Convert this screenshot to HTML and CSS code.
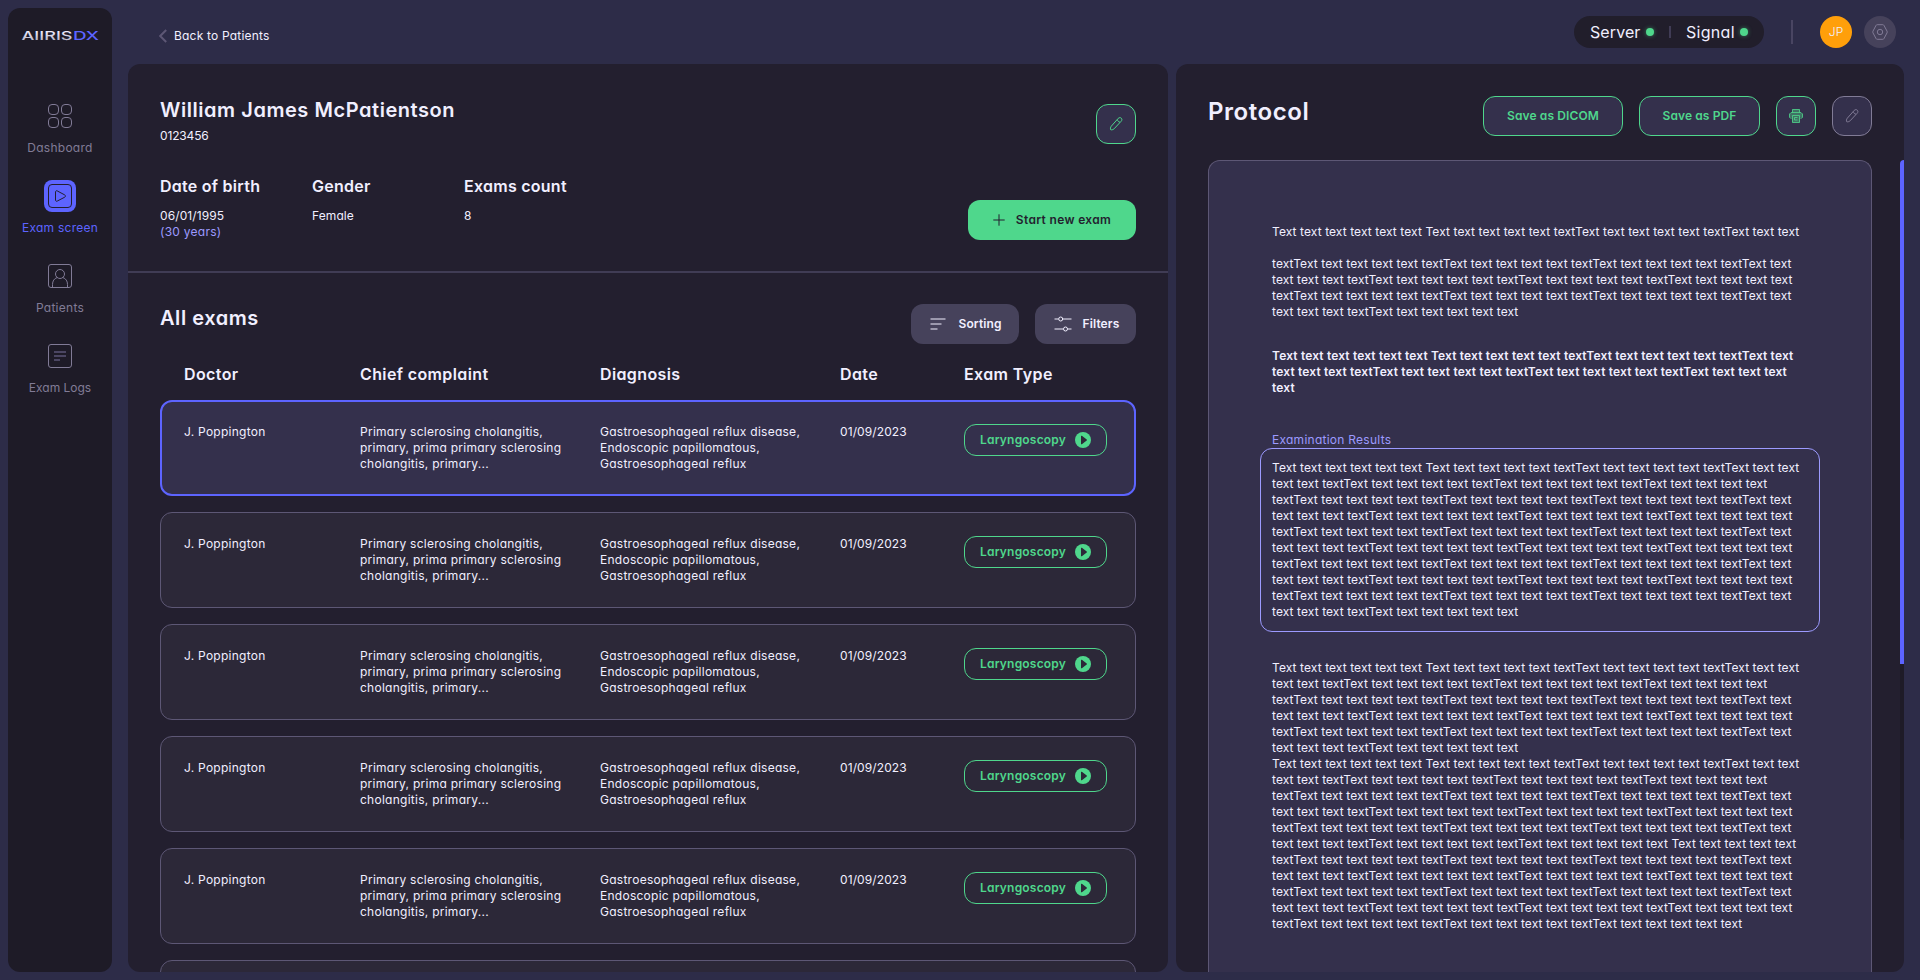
FILE: index.html
```html
<!DOCTYPE html>
<html lang="en">
<head>
    <meta charset="UTF-8">
    <meta name="viewport" content="width=device-width, initial-scale=1.0">
    <title>AIIRIS DX - Exam screen</title>
    <link rel="stylesheet" href="styles.css">
</head>
<body>

<aside class="sidebar">
    <svg class="logo" width="78" height="20" viewBox="0 0 78 20">
        <defs>
            <linearGradient id="logoFill" x1="0" y1="0" x2="0" y2="1">
                <stop offset="0.2" stop-color="#f1efff"/>
                <stop offset="1" stop-color="#a9a6b8"/>
            </linearGradient>
        </defs>
        <text x="0.5" y="14.2" textLength="51" lengthAdjust="spacingAndGlyphs" fill="url(#logoFill)">AIIRIS</text>
        <text x="52" y="14.2" textLength="26" lengthAdjust="spacingAndGlyphs" fill="#5d64ff">DX</text>
    </svg>
    <nav>
        <a class="nav-item">
            <span class="nav-icon">
                <svg width="24" height="24" viewBox="0 0 24 24">
                    <rect x="0.5" y="0.5" width="10" height="10" rx="3.5"/>
                    <rect x="13.5" y="0.5" width="10" height="10" rx="3.5"/>
                    <rect x="0.5" y="13.5" width="10" height="10" rx="3.5"/>
                    <rect x="13.5" y="13.5" width="10" height="10" rx="3.5"/>
                </svg>
            </span>
            <span class="nav-label">Dashboard</span>
        </a>
        <a class="nav-item active">
            <span class="nav-icon">
                <svg width="24" height="24" viewBox="0 0 24 24">
                    <rect x="0.5" y="0.5" width="23" height="23" rx="3.5"/>
                    <path d="M7.5 8v8c0 1 .8 1.600 1.700 1.100l7.500-3.900c1-.5 1-1.800 0-2.300l-7.500-4c-.9-.5-1.700.1-1.700 1.100z"/>
                </svg>
            </span>
            <span class="nav-label">Exam screen</span>
        </a>
        <a class="nav-item">
            <span class="nav-icon">
                <svg width="24" height="24" viewBox="0 0 24 24">
                    <rect x="0.5" y="0.5" width="23" height="23" rx="2.5"/>
                    <circle cx="12" cy="10" r="4.5"/>
                    <path d="M4.500 23v-2.500c0-3.500 1.700-6 4.700-7M19.500 23v-2.500c0-3.500-1.700-6-4.700-7"/>
                </svg>
            </span>
            <span class="nav-label">Patients</span>
        </a>
        <a class="nav-item">
            <span class="nav-icon">
                <svg width="24" height="24" viewBox="0 0 24 24">
                    <rect x="0.5" y="0.5" width="23" height="23" rx="2.5"/>
                    <path class="thick" d="M6 8h12M6 12h12M6 16h6"/>
                </svg>
            </span>
            <span class="nav-label logs">Exam Logs</span>
        </a>
    </nav>
</aside>

<div class="page">
    <header>
        <a class="back-link">
            <svg width="8" height="14" viewBox="0 0 8 14"><path d="M7.200 1L1.200 7l6 6"/></svg>
            Back to Patients
        </a>
        <div class="header-right">
            <div class="status-pill">
                <span>Server</span><i class="dot"></i>
                <i class="pill-line"></i>
                <span class="signal">Signal</span><i class="dot"></i>
            </div>
            <i class="header-line"></i>
            <span class="avatar">JP</span>
            <span class="settings">
                <svg width="16" height="16" viewBox="0 0 16 16">
                    <path d="M5.200.7h5.600c.5 0 .9.2 1.100.6l3.100 5.800c.3.600.3 1.200 0 1.800l-3.100 5.800c-.2.400-.6.600-1.100.600H5.200c-.5 0-.9-.2-1.100-.6L1 8.900c-.3-.6-.3-1.200 0-1.800l3.100-5.800c.2-.4.600-.6 1.100-.6z"/>
                    <circle cx="8" cy="8" r="2.700"/>
                </svg>
            </span>
        </div>
    </header>

    <main>
        <section class="panel exams-panel">
            <div class="patient">
                <div class="patient-info">
                    <h1>William James McPatientson</h1>
                    <p class="patient-id">0123456</p>
                    <dl>
                        <div><dt>Date of birth</dt><dd>06/01/1995<br><em>(30 years)</em></dd></div>
                        <div><dt>Gender</dt><dd>Female</dd></div>
                        <div><dt>Exams count</dt><dd>8</dd></div>
                    </dl>
                </div>
                <div class="patient-actions">
                    <button class="btn outline square">
                        <svg width="14" height="14" viewBox="0 0 14 14"><path d="M9.200 1.400c1-1 2.300-1 3.100-.2.800.8.800 2.100-.2 3.100l-7 7.500c-.9.900-2.700 1.300-3.400.900-.5-.6-.3-2.500.6-3.500zM8.400 2.600c.3 1.500 1.100 2.400 2.600 2.600"/></svg>
                    </button>
                    <button class="btn filled">
                        <svg width="12" height="12" viewBox="0 0 12 12"><path d="M6 .3v11.400M.3 6h11.400"/></svg>
                        Start new exam
                    </button>
                </div>
            </div>

            <div class="exams">
                <div class="exams-head">
                    <h2>All exams</h2>
                    <button class="btn soft sorting">
                        <svg width="16" height="14" viewBox="0 0 16 14"><path d="M.5 2h15M.5 7h11M.5 12h7"/></svg>
                        Sorting
                    </button>
                    <button class="btn soft filters">
                        <svg width="18" height="16" viewBox="0 0 18 16">
                            <path d="M.5 3h4M9 3h8.500M.5 13h8.500M13.500 13h4"/>
                            <circle cx="6.700" cy="3" r="2"/><circle cx="11.500" cy="13" r="2"/>
                        </svg>
                        Filters
                    </button>
                </div>
                <div class="exam-row exam-titles">
                    <span>Doctor</span>
                    <span>Chief complaint</span>
                    <span>Diagnosis</span>
                    <span>Date</span>
                    <span>Exam Type</span>
                </div>
                <div id="examList"></div>
            </div>
        </section>

        <section class="panel protocol">
            <div class="protocol-head">
                <h2>Protocol</h2>
                <button class="btn outline dicom">Save as DICOM</button>
                <button class="btn outline pdf">Save as PDF</button>
                <button class="btn outline square">
                    <svg width="16" height="16" viewBox="0 0 16 16">
                        <path class="shade" d="M4 1.500h8V5h1.500l1 1v3L12 10v4.500H4V10L1.500 9V6l1-1H4z"/>
                        <path class="thin" d="M4.500 4.500V1.500h7v3M3.500 10.500L1.500 9.500V6l1.500-1.500h10L14.500 6v3.500l-2 1M4.500 7.500h7v7h-7zM9.500 9.500h-3v2.500h3"/>
                    </svg>
                </button>
                <button class="btn outline square muted">
                    <svg width="14" height="14" viewBox="0 0 14 14"><path d="M9.200 1.400c1-1 2.300-1 3.100-.2.800.8.800 2.100-.2 3.100l-7 7.500c-.9.900-2.700 1.300-3.400.900-.5-.6-.3-2.500.6-3.500zM8.400 2.600c.3 1.500 1.100 2.400 2.600 2.600"/></svg>
                </button>
            </div>
            <div class="protocol-body">
                <article class="paper">
<p>Text text text text text text Text text text text text textText text text text text textText text text</p>
<p class="history">textText text text text text textText text text text text textText text text text text textText text
text text text textText text text text text textText text text text text textText text text text text
textText text text text text textText text text text text textText text text text text textText text
text text text textText text text text text text</p>
<p class="summary">Text text text text text text Text text text text text textText text text text text textText text
text text text textText text text text text textText text text text text textText text text text
text</p>
<label>Examination Results</label>
<p class="results">Text text text text text text Text text text text text textText text text text text textText text text
text text textText text text text text textText text text text text textText text text text text
textText text text text text textText text text text text textText text text text text textText text
text text text textText text text text text textText text text text text textText text text text text
textText text text text text textText text text text text textText text text text text textText text
text text text textText text text text text textText text text text text textText text text text text
textText text text text text textText text text text text textText text text text text textText text
text text text textText text text text text textText text text text text textText text text text text
textText text text text text textText text text text text textText text text text text textText text
text text text textText text text text text text</p>
<p>Text text text text text text Text text text text text textText text text text text textText text text
text text textText text text text text textText text text text text textText text text text text
textText text text text text textText text text text text textText text text text text textText text
text text text textText text text text text textText text text text text textText text text text text
textText text text text text textText text text text text textText text text text text textText text
text text text textText text text text text text</p>
<p>Text text text text text text Text text text text text textText text text text text textText text text
text text textText text text text text textText text text text text textText text text text text
textText text text text text textText text text text text textText text text text text textText text
text text text textText text text text text textText text text text text textText text text text text
textText text text text text textText text text text text textText text text text text textText text
text text text textText text text text text textText text text text text text Text text text text text
textText text text text text textText text text text text textText text text text text textText text
text text text textText text text text text textText text text text text textText text text text text
textText text text text text textText text text text text textText text text text text textText text
text text text textText text text text text textText text text text text textText text text text text
textText text text text text textText text text text text textText text text text text text</p>
                </article>
                <div class="scrollbar"><div class="scroll-thumb"></div></div>
            </div>
        </section>
    </main>
</div>

<script>
    const exams = Array.from({ length: 6 }, () => ({
        doctor: 'J. Poppington',
        complaint: 'Primary sclerosing cholangitis,\nprimary, prima primary sclerosing\ncholangitis, primary...',
        diagnosis: 'Gastroesophageal reflux disease,\nEndoscopic papillomatous,\nGastroesophageal reflux',
        date: '01/09/2023',
        type: 'Laryngoscopy'
    }));

    const list = document.getElementById('examList');

    list.innerHTML = exams.map((exam, i) => {
        // the last card is only a sliver at the bottom of the panel
        if (i === exams.length - 1) {
            return '<div class="exam-card"></div>';
        }
        return `
            <div class="exam-row exam-card ${i === 0 ? 'selected' : ''}">
                <span>${exam.doctor}</span>
                <span>${exam.complaint}</span>
                <span>${exam.diagnosis}</span>
                <span class="exam-date">${exam.date}</span>
                <span class="exam-type">${exam.type}
                    <svg width="16" height="16" viewBox="0 0 16 16"><circle cx="8" cy="8" r="8"/><path d="M6 4.200c0-.5.500-.7.900-.4l4.800 3.700c.4.300.4.700 0 1l-4.800 3.700c-.4.300-.9.100-.9-.4z"/></svg>
                </span>
            </div>
        `;
    }).join('');
</script>

</body>
</html>
```
FILE: styles.css
```css
* {
    box-sizing: border-box;
}
html {
    height: 100%;
    overflow: hidden;
}
body {
    display: flex;
    gap: 16px;
    height: 980px;
    margin: 0;
    padding: 8px 16px 8px 8px;
    overflow: hidden;
    background-color: #2d2c48;
    color: #f1efff;
    font-family: Inter, "Liberation Sans", sans-serif;
    font-feature-settings: "cv11";
    font-size: 12px;
    line-height: 16px;
    letter-spacing: 0.26px;
}
h1, h2, p, dl, dd {
    margin: 0;
}
svg {
    display: block;
    flex: none;
    fill: none;
    stroke: currentColor;
}

/* Sidebar */
.sidebar {
    display: flex;
    flex-direction: column;
    align-items: center;
    flex: none;
    width: 104px;
    padding-top: 18px;
    border-radius: 12px;
    background-color: #1e1b27;
}
.logo {
    stroke: none;
    font-size: 12px;
    font-weight: 500;
    letter-spacing: 0;
}
nav {
    display: flex;
    flex-direction: column;
    gap: 24px;
    margin-top: 54px;
}
.nav-item {
    display: flex;
    flex-direction: column;
    align-items: center;
    gap: 8px;
    color: #817b96;
}
.nav-icon {
    display: grid;
    place-items: center;
    width: 32px;
    height: 32px;
    border-radius: 8px;
}
.nav-label.logs {
    letter-spacing: 0;
}
.nav-icon .thick {
    stroke: #4b4662;
    stroke-width: 2;
}
.nav-item.active {
    color: #5d64ff;
}
.active .nav-icon {
    background-color: #5d64ff;
    color: #231f2f;
}

/* Top bar */
.page {
    flex: 1;
    min-width: 0;
    display: flex;
    flex-direction: column;
}
header {
    display: flex;
    justify-content: space-between;
    height: 56px;
    padding: 8px 8px 0 31px;
}
.back-link {
    display: flex;
    align-items: center;
    gap: 7px;
    height: 40px;
    letter-spacing: 0.2px;
}
.back-link svg {
    stroke: #5d5775;
    stroke-width: 2;
}
.header-right {
    display: flex;
    align-items: center;
    height: 32px;
}
.status-pill {
    display: flex;
    align-items: center;
    width: 190px;
    height: 32px;
    padding-left: 16px;
    border-radius: 16px;
    background-color: #211e2b;
    font-size: 16px;
    letter-spacing: 0.1px;
}
.status-pill span {
    width: 50px;
}
.status-pill .signal {
    width: 48px;
    letter-spacing: 0.3px;
}
.dot {
    width: 8px;
    height: 8px;
    margin-left: 6px;
    border-radius: 50%;
    background-color: #4fd78c;
    box-shadow: 0 0 4px rgba(79, 215, 140, 0.5);
}
.pill-line {
    width: 2px;
    height: 12px;
    margin: 0 15px;
    background-color: #403c55;
}
.header-line {
    width: 2px;
    height: 24px;
    margin: 0 27px;
    background-color: #494562;
}
.avatar, .settings {
    display: grid;
    place-items: center;
    width: 32px;
    height: 32px;
    border-radius: 50%;
}
.avatar {
    margin-right: 12px;
    background-color: #ff9f0a;
    font-weight: 300;
    letter-spacing: 0;
}
.settings {
    background-color: #46425b;
    color: #817b96;
}

/* Panels */
main {
    flex: 1;
    min-height: 0;
    display: flex;
    gap: 8px;
}
.panel {
    overflow: hidden;
    border-radius: 12px;
    background-color: #231f2f;
}
.exams-panel {
    flex: none;
    width: 1040px;
}
.btn {
    display: flex;
    align-items: center;
    justify-content: center;
    height: 40px;
    padding: 0;
    border: none;
    border-radius: 12px;
    font: inherit;
    font-weight: 600;
    letter-spacing: 0.1px;
    color: inherit;
}
.btn.outline {
    border: 1px solid #4fd78c;
    background-color: #34304c;
    color: #4fd78c;
}
.btn.filled {
    gap: 11px;
    width: 168px;
    background-color: #4fd78c;
    color: #231f2f;
    letter-spacing: 0.33px;
}
.btn.soft {
    padding-left: 2px;
    background-color: #46425b;
}
.btn.square {
    width: 40px;
}
.btn.outline.muted {
    border-color: #817b96;
    color: #817b96;
}

/* Patient */
.patient {
    display: flex;
    justify-content: space-between;
    height: 209px;
    padding: 32px 32px 0;
    border-bottom: 2px solid #403c55;
}
h1, h2 {
    font-size: 20px;
    font-weight: 600;
    line-height: 28px;
    letter-spacing: 0.55px;
}
.patient-id {
    margin-top: 4px;
    letter-spacing: -0.15px;
}
dl {
    display: grid;
    grid-template-columns: repeat(3, 152px);
    margin-top: 30px;
}
dt {
    margin-bottom: 10px;
    font-size: 16px;
    font-weight: 600;
    line-height: 24px;
}
dd {
    letter-spacing: 0.1px;
}
em {
    color: #9c9aff;
    font-style: normal;
    letter-spacing: 0.26px;
}
.patient-actions {
    display: flex;
    flex-direction: column;
    align-items: flex-end;
    gap: 56px;
    padding-top: 8px;
}

/* Exams */
.exams {
    padding: 31px 32px 0;
}
.exams-head {
    display: flex;
    gap: 16px;
}
.exams-head h2 {
    margin-right: auto;
}
.sorting {
    width: 108px;
    gap: 12px;
}
.filters {
    width: 101px;
    gap: 11px;
}
.exam-row {
    display: grid;
    grid-template-columns: 176px 240px 240px 124px 143px;
    padding-left: 24px;
}
.exam-titles {
    margin: 18px 0 14px;
    font-size: 16px;
    font-weight: 600;
    line-height: 24px;
    letter-spacing: 0.38px;
}
.exam-card {
    height: 96px;
    margin-bottom: 16px;
    padding: 23px 0 0 23px;
    border: 1px solid #5d5775;
    border-radius: 12px;
    background-color: #2c2838;
    white-space: pre-line;
}
.exam-card.selected {
    padding: 22px 0 0 22px;
    border: 2px solid #5d64ff;
    background-color: #34304c;
}
.exam-date {
    letter-spacing: 0.1px;
}
.exam-type {
    display: flex;
    align-items: center;
    justify-content: space-between;
    height: 32px;
    padding: 0 15px;
    border: 1px solid #4fd78c;
    border-radius: 12px;
    color: #4fd78c;
    font-weight: 600;
    letter-spacing: 0.2px;
    white-space: normal;
}
.exam-type svg {
    stroke: none;
    fill: #4fd78c;
}
.exam-type path {
    fill: #2c2838;
}

/* Protocol */
.protocol {
    flex: 1;
    padding: 32px 0 0 32px;
}
.protocol-head {
    display: flex;
    gap: 16px;
    margin-right: 32px;
}
.protocol-head h2 {
    margin-right: auto;
    font-size: 24px;
    line-height: 32px;
}
.dicom {
    width: 140px;
}
.pdf {
    width: 121px;
}
.shade {
    fill: currentColor;
    stroke: none;
    opacity: 0.4;
}
.thin {
    stroke-width: 0.8;
}
.protocol-body {
    display: flex;
    gap: 28px;
    height: 812px;
    margin-top: 24px;
}
.paper {
    width: 664px;
    padding: 63px 51px 0;
    border: 1px solid #5d5775;
    border-bottom: none;
    border-radius: 12px 12px 0 0;
    background-color: #34304c;
}
.paper p {
    padding-left: 12px;
    letter-spacing: 0.09px;
    white-space: pre;
}
.paper .history {
    margin-top: 16px;
}
.paper .summary {
    margin-top: 28px;
    font-weight: 600;
    letter-spacing: 0.155px;
}
.paper label {
    display: block;
    margin: 36px 0 0 12px;
    color: #9c9aff;
}
.paper .results {
    height: 184px;
    margin-bottom: 28px;
    padding: 11px;
    border: 1px solid #9c9aff;
    border-radius: 12px;
}
.scrollbar {
    width: 4px;
    height: 680px;
    border-radius: 4px 0 0 4px;
    background-color: #1e1b27;
}
.scroll-thumb {
    height: 504px;
    border-radius: 4px 0 0 0;
    background-color: #5d64ff;
}
```
